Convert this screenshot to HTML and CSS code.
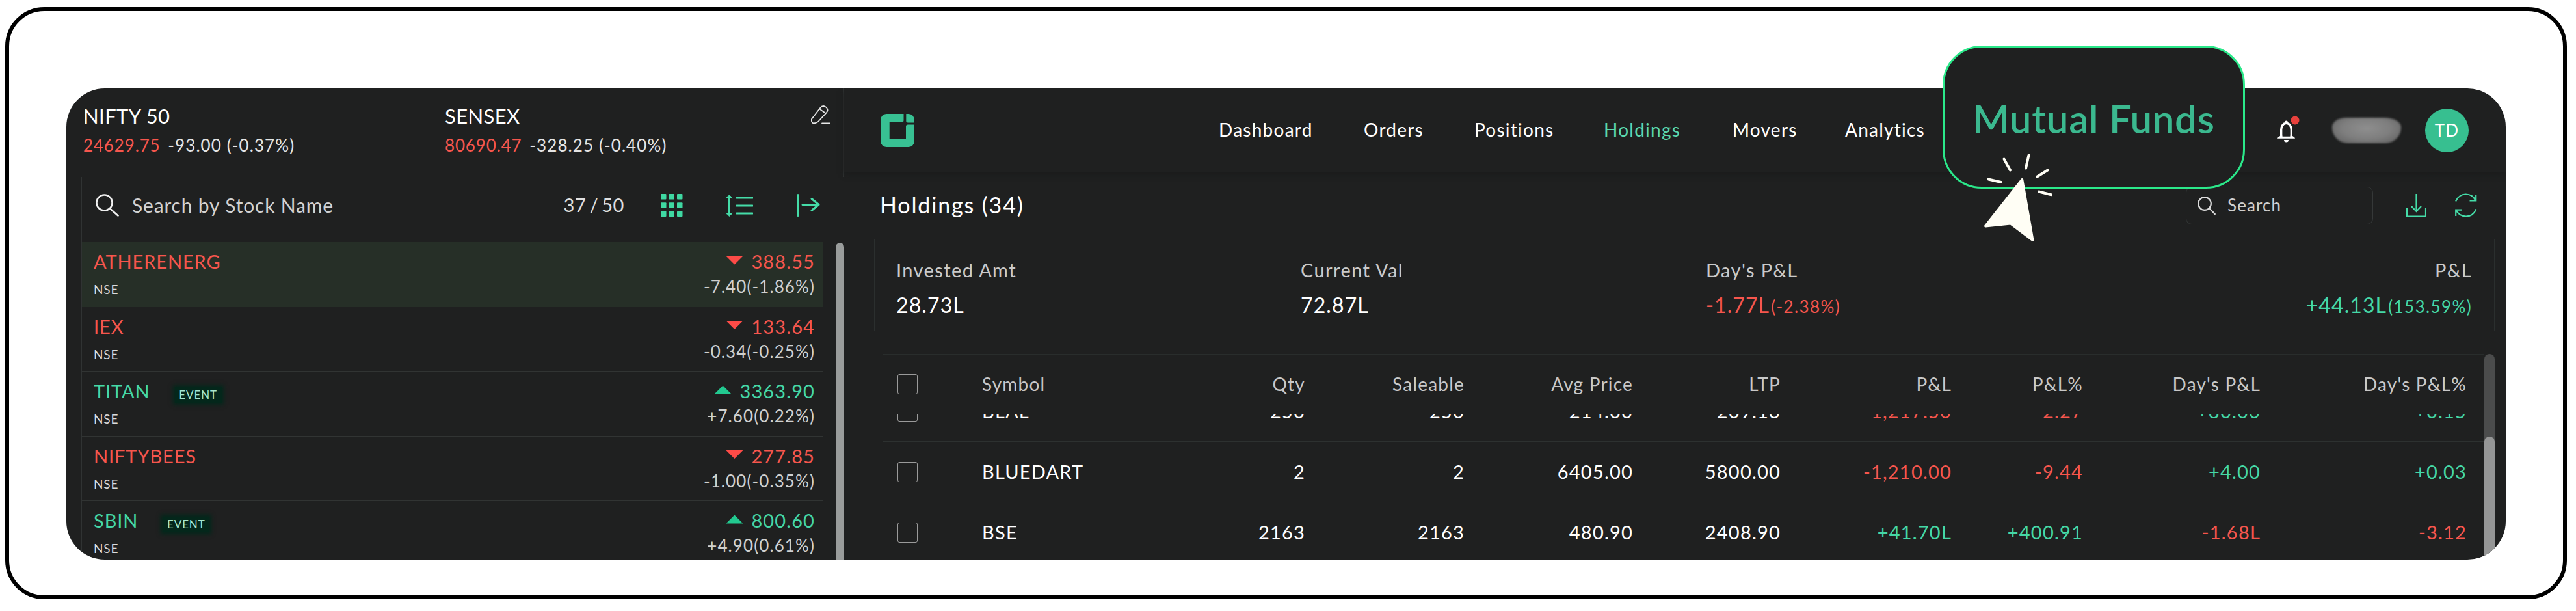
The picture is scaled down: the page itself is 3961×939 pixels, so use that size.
FILE: index.html
```html
<!DOCTYPE html>
<html lang="en">

<head>
    <meta charset="UTF-8">
    <meta name="viewport" content="width=device-width, initial-scale=1.0">
    <title>Holdings</title>
    <link rel="stylesheet" href="styles.css">
</head>

<body>
    <div class="frame">
        <div class="app">

            <aside class="sidebar">
                <div class="indices">
                    <div class="index">
                        <h4>NIFTY 50</h4>
                        <p><span class="down">24629.75</span> -93.00 (-0.37%)</p>
                    </div>
                    <div class="index">
                        <h4>SENSEX</h4>
                        <p><span class="down">80690.47</span> -328.25 (-0.40%)</p>
                    </div>
                    <svg class="edit" width="30" height="29" viewBox="0 0 30 29">
                        <path d="M1 21 14.5 3.5C17 .5 20 .3 23 2.6c3 2.400 3.200 5.400 1 8.200L11.500 24.500C9 27.200 6.500 27.500 3 27.300 1 26 .5 23.500 1 21ZM13.200 5.500l9.300 6.500M17 27.500h12" />
                    </svg>
                </div>

                <div class="watchlist">
                    <div class="watch-search">
                        <svg class="search-icon" width="37" height="35" viewBox="0 0 37 35">
                            <circle cx="14.500" cy="13.500" r="12" />
                            <path d="M23 22.500 35.500 33.500" />
                        </svg>
                        <span class="placeholder">Search by Stock Name</span>
                        <span class="count">37 / 50</span>
                        <svg class="tool grid-icon" width="34" height="35" viewBox="0 0 34 35">
                            <rect x="0" y="0" width="8.500" height="8.500" rx="1" />
                            <rect x="12.500" y="0" width="8.500" height="8.500" rx="1" />
                            <rect x="25" y="0" width="8.500" height="8.500" rx="1" />
                            <rect x="0" y="13.200" width="8.500" height="8.500" rx="1" />
                            <rect x="12.500" y="13.200" width="8.500" height="8.500" rx="1" />
                            <rect x="25" y="13.200" width="8.500" height="8.500" rx="1" />
                            <rect x="0" y="26.500" width="8.500" height="8.500" rx="1" />
                            <rect x="12.500" y="26.500" width="8.500" height="8.500" rx="1" />
                            <rect x="25" y="26.500" width="8.500" height="8.500" rx="1" />
                        </svg>
                        <svg class="tool sort-icon" width="42" height="34" viewBox="0 0 42 34">
                            <path d="M5.500 4v26M16.500 5H41M16.500 17H41M16.500 29H41" />
                            <path class="solid" d="M5.500.8 10.300 5.500H.7ZM5.500 33.200 10.300 28.500H.7Z" />
                        </svg>
                        <svg class="tool exit-icon" width="37" height="35" viewBox="0 0 37 35">
                            <path d="M2 1.500v32M9 16.500h25M23 7.500l11 9-11 9" />
                        </svg>
                    </div>

                    <div class="list">
                        <div class="stocks">
                            <div class="stock active">
                                <div class="name">
                                    <h5 class="down">ATHERENERG</h5>
                                    <small>NSE</small>
                                </div>
                                <div class="price">
                                    <h5 class="down"><i class="tri tri-down"></i>388.55</h5>
                                    <p>-7.40(-1.86%)</p>
                                </div>
                            </div>
                            <div class="stock">
                                <div class="name">
                                    <h5 class="down">IEX</h5>
                                    <small>NSE</small>
                                </div>
                                <div class="price">
                                    <h5 class="down"><i class="tri tri-down"></i>133.64</h5>
                                    <p>-0.34(-0.25%)</p>
                                </div>
                            </div>
                            <div class="stock">
                                <div class="name">
                                    <h5 class="up">TITAN<span class="badge">EVENT</span></h5>
                                    <small>NSE</small>
                                </div>
                                <div class="price">
                                    <h5 class="up"><i class="tri tri-up"></i>3363.90</h5>
                                    <p>+7.60(0.22%)</p>
                                </div>
                            </div>
                            <div class="stock">
                                <div class="name">
                                    <h5 class="down">NIFTYBEES</h5>
                                    <small>NSE</small>
                                </div>
                                <div class="price">
                                    <h5 class="down"><i class="tri tri-down"></i>277.85</h5>
                                    <p>-1.00(-0.35%)</p>
                                </div>
                            </div>
                            <div class="stock">
                                <div class="name">
                                    <h5 class="up">SBIN<span class="badge">EVENT</span></h5>
                                    <small>NSE</small>
                                </div>
                                <div class="price">
                                    <h5 class="up"><i class="tri tri-up"></i>800.60</h5>
                                    <p>+4.90(0.61%)</p>
                                </div>
                            </div>
                        </div>
                        <div class="scrollbar"></div>
                    </div>
                </div>
            </aside>

            <main class="main">
                <header class="topbar">
                    <svg class="logo" width="52" height="51" viewBox="0 0 52 51">
                        <path d="M9 0H35.500V10a3 3 0 0 1-3 3H13.700V38H39V19.500a3 3 0 0 1 3-3H52V42a9 9 0 0 1-9 9H9a9 9 0 0 1-9-9V9a9 9 0 0 1 9-9Z" />
                        <path d="M39.300 0H43a9 9 0 0 1 9 9v4.500H42a2.700 2.700 0 0 1-2.700-2.700Z" />
                    </svg>
                    <nav>
                        <a>Dashboard</a>
                        <a>Orders</a>
                        <a>Positions</a>
                        <a class="current">Holdings</a>
                        <a>Movers</a>
                        <a>Analytics</a>
                    </nav>
                    <div class="account">
                        <svg class="bell" width="34" height="41" viewBox="0 0 34 41">
                            <path class="line" d="M5.800 33V21.500C5.800 15.500 9 11.500 13.500 11.500S21.200 15.500 21.200 21.500V33" />
                            <path d="M13.500 7.500a2.500 2.500 0 0 1 2.500 2.500v2h-5v-2a2.500 2.500 0 0 1 2.500-2.500ZM0 34.800C.5 32.500 3 32 4.500 30.500h18C24 32 26.500 32.500 27 34.800ZM10 37h7a3.500 3.500 0 0 1-7 0Z" />
                            <path class="hole" d="M7.600 31.800V21.500C7.600 16.500 10 13.400 13.500 13.400s5.900 3.100 5.900 8.100v10.300Z" />
                            <circle class="dot" cx="27" cy="7" r="6.500" />
                        </svg>
                        <div class="hidden-id"></div>
                        <div class="avatar">TD</div>
                    </div>
                </header>

                <div class="title-row">
                    <h2>Holdings (34)</h2>
                    <div class="search-box">
                        <svg class="search-icon" width="28" height="28" viewBox="0 0 28 28">
                            <circle cx="11" cy="11" r="9.800" />
                            <path d="M18 18 26.800 27" />
                        </svg>
                        <span>Search</span>
                    </div>
                    <svg class="tool thin download" width="31" height="36" viewBox="0 0 31 36">
                        <path d="M15.500 0V27M8 19l7.500 8L23 19M1 22v12.700H30V22" />
                    </svg>
                    <svg class="tool thin refresh" width="34" height="37" viewBox="0 0 34 37">
                        <path d="M1 12.500C4 5.500 9.500 1.500 16.500 1.500S29 5.500 31.500 11M32.200 2v9.300H22.500M32.500 24.500C29.500 31.500 24 35.500 17 35.500S4.500 31.500 1.500 26M1.200 35v-9.300H11" />
                    </svg>
                </div>

                <section class="summary">
                    <div>
                        <label>Invested Amt</label>
                        <p>28.73L</p>
                    </div>
                    <div>
                        <label>Current Val</label>
                        <p>72.87L</p>
                    </div>
                    <div>
                        <label>Day's P&amp;L</label>
                        <p class="down">-1.77L<small>(-2.38%)</small></p>
                    </div>
                    <div class="right">
                        <label>P&amp;L</label>
                        <p class="up">+44.13L<small>(153.59%)</small></p>
                    </div>
                </section>

                <section class="holdings">
                    <div class="table">
                        <div class="row head">
                            <i class="check"></i>
                            <span>Symbol</span>
                            <span>Qty</span>
                            <span>Saleable</span>
                            <span>Avg Price</span>
                            <span>LTP</span>
                            <span>P&amp;L</span>
                            <span>P&amp;L%</span>
                            <span>Day's P&amp;L</span>
                            <span>Day's P&amp;L%</span>
                        </div>
                        <!-- rows scroll under the header, the first one is half way out -->
                        <div class="rows">
                            <div class="row">
                                <i class="check"></i>
                                <span>BLAL</span>
                                <span>250</span>
                                <span>250</span>
                                <span>214.00</span>
                                <span>209.13</span>
                                <span class="down">-1,217.50</span>
                                <span class="down">-2.27</span>
                                <span class="up">+80.00</span>
                                <span class="up">+0.15</span>
                            </div>
                            <div class="row">
                                <i class="check"></i>
                                <span>BLUEDART</span>
                                <span>2</span>
                                <span>2</span>
                                <span>6405.00</span>
                                <span>5800.00</span>
                                <span class="down">-1,210.00</span>
                                <span class="down">-9.44</span>
                                <span class="up">+4.00</span>
                                <span class="up">+0.03</span>
                            </div>
                            <div class="row">
                                <i class="check"></i>
                                <span>BSE</span>
                                <span>2163</span>
                                <span>2163</span>
                                <span>480.90</span>
                                <span>2408.90</span>
                                <span class="up">+41.70L</span>
                                <span class="up">+400.91</span>
                                <span class="down">-1.68L</span>
                                <span class="down">-3.12</span>
                            </div>
                        </div>
                    </div>
                    <div class="track">
                        <div class="thumb"></div>
                    </div>
                </section>
            </main>
        </div>

        <div class="callout">Mutual Funds</div>
        <svg class="cursor" width="112" height="142" viewBox="3048 232 112 142">
            <path class="arrow" d="M3109.300 276 3053 347.500 3091.500 343.500 3125.500 369Z" />
            <path class="rays" d="M3057.500 275.500 3077 280M3081.500 244.500 3091 261.500M3119.500 238.500 3115 258.500M3148.500 261.500 3132.500 271.500M3135 294.500 3154 299.300" />
        </svg>
    </div>
</body>

</html>
```

FILE: styles.css
```css
* {
    box-sizing: border-box;
}

body {
    margin: 0;
    padding: 11px 14px 0 8px;
    background: #fff;
    font-family: Lato, "Open Sans", sans-serif;
    letter-spacing: 1.1px;
    color: #fff;
}

h2, h4, h5, p {
    margin: 0;
    font-weight: 400;
}

i {
    font-style: normal;
}

svg {
    display: block;
    flex: none;
    fill: none;
}

.up {
    color: #45d8a6;
}

.down {
    color: #f6564d;
}

.frame {
    position: relative;
    height: 910px;
    padding: 119px 0 0 88px;
    border: 6px solid #000;
    border-radius: 60px;
}

.app {
    display: grid;
    grid-template-columns: 1196px 1fr;
    width: 3751px;
    height: 724px;
    overflow: hidden;
    border-radius: 59px;
    background: #1f2020;
}

/* left column */
.sidebar {
    display: flex;
    flex-direction: column;
    min-height: 0;
}

.indices {
    display: flex;
    flex: none;
    height: 136px;
    padding: 22px 20px 0 26px;
    border-right: 1px solid #303333;
}

.index {
    width: 556px;
}

.index h4 {
    font-size: 31px;
    line-height: 40px;
    letter-spacing: 0.4px;
}

.index p {
    margin-top: 5px;
    font-size: 26px;
    line-height: 40px;
    color: #e4e4e4;
}

.index .down {
    margin-right: 4px;
    letter-spacing: 0.85px;
}

.edit {
    margin: 4px 0 0 auto;
    stroke: #e6e6e6;
    stroke-width: 1.8;
    stroke-linecap: round;
}

.watchlist {
    display: flex;
    flex: 1;
    flex-direction: column;
    min-height: 0;
    margin-left: 23px;
    border-left: 1px solid #303333;
}

.watch-search {
    display: flex;
    flex: none;
    align-items: center;
    height: 96px;
    padding: 0 36px 8px 20px;
    border-bottom: 1px solid #343836;
}

.search-icon {
    stroke: #f0f0f0;
    stroke-width: 2.6;
    stroke-linecap: round;
}

.placeholder {
    margin-left: 20px;
    padding-bottom: 2px;
    font-size: 30px;
    letter-spacing: 0.84px;
    color: #d2d2d2;
}

.count {
    margin-left: auto;
    padding-bottom: 2px;
    font-size: 29px;
    letter-spacing: 0.6px;
    word-spacing: -3px;
    color: #e0e0e0;
}

.tool {
    stroke: #45dca8;
    stroke-width: 3;
    stroke-linecap: round;
    stroke-linejoin: round;
}

.tool.thin {
    stroke-width: 2.2;
    stroke-linecap: butt;
    stroke-linejoin: miter;
}

.grid-icon {
    margin-left: 56px;
    fill: #3fd8a2;
    stroke: none;
}

.sort-icon {
    margin-left: 66px;
}

.sort-icon .solid {
    fill: #45dca8;
    stroke-width: 1;
}

.exit-icon {
    margin-left: 67px;
}

.list {
    display: flex;
    flex: 1;
    justify-content: space-between;
    min-height: 0;
    padding-top: 4px;
}

.stocks {
    width: 1140px;
}

.stock {
    display: flex;
    justify-content: space-between;
    height: 99.5px;
    padding: 12px 13px 0 18px;
    border-bottom: 1px solid #313433;
}

.stock.active {
    background: #262f27;
    border-color: #262f27;
}

.stock h5 {
    display: flex;
    align-items: center;
    font-size: 29px;
    line-height: 36px;
}

.name h5 {
    letter-spacing: 0.9px;
}

.name small {
    display: block;
    margin-top: 13px;
    font-size: 19px;
    line-height: 24px;
    letter-spacing: 0.8px;
    color: #dcdcdc;
}

.badge {
    margin: 6px 0 -6px 38px;
    width: 72px;
    text-align: center;
    font-size: 17px;
    line-height: 24px;
    background: #04271b;
    box-shadow: 0 0 6px 3px #04271b;
    color: #a9e6cf;
}

.price h5 {
    justify-content: flex-end;
}

.price p {
    margin-top: 2px;
    font-size: 26px;
    line-height: 36px;
    text-align: right;
    color: #cfd0cf;
}

.tri {
    width: 26px;
    height: 13px;
    margin: -4px 13px 0 0;
}

.tri-down {
    background: #fd4b47;
    clip-path: polygon(0 0, 100% 0, 50% 100%);
}

.tri-up {
    background: #22c990;
    clip-path: polygon(50% 0, 100% 100%, 0 100%);
}

.scrollbar {
    width: 13px;
    margin-top: 1px;
    border-radius: 7px 7px 0 0;
    background: #999c9b;
}

/* right side */
.main {
    display: flex;
    flex-direction: column;
    min-width: 0;
    min-height: 0;
}

.topbar {
    display: flex;
    flex: none;
    align-items: center;
    height: 128px;
    padding: 0 57px 0 56px;
    box-shadow: 0 4px 8px #1b1c1c;
}

.logo {
    fill: #38c193;
}

.topbar nav {
    display: grid;
    grid-template-columns: 223px 170px 199px 198px 173px 130px;
    margin-left: 468px;
    padding-bottom: 2px;
    font-size: 28px;
    letter-spacing: 1.25px;
}

.topbar .current {
    color: #5bd9ae;
}

.account {
    display: flex;
    align-items: center;
    margin-left: auto;
}

.bell {
    margin-bottom: 4px;
}

.bell path {
    fill: #fff;
}

.bell .line {
    fill: none;
    stroke: #fff;
    stroke-width: 3.6;
}

.bell .hole {
    fill: #1f2020;
}

.bell .dot {
    fill: #e8413d;
}

/* smudge over the client id */
.hidden-id {
    width: 106px;
    height: 39px;
    margin-left: 50px;
    border-radius: 22px 26px 24px 24px / 14px 14px 24px 24px;
    background: radial-gradient(ellipse at 50% 42%, #8e8e8e 0%, #7e7e7e 50%, #5c5c5c 100%);
    filter: blur(1.5px);
}

.avatar {
    display: flex;
    align-items: center;
    justify-content: center;
    width: 67px;
    height: 67px;
    margin-left: 37px;
    border-radius: 50%;
    background: #37bf90;
    font-size: 26px;
}

.title-row {
    display: flex;
    flex: none;
    align-items: center;
    height: 103px;
    padding: 0 44px 0 55px;
}

.title-row h2 {
    padding-bottom: 2px;
    font-size: 34px;
    letter-spacing: 1.85px;
}

.search-box {
    display: flex;
    align-items: center;
    width: 288px;
    height: 58px;
    margin-left: auto;
    padding-left: 17px;
    border: 1px solid #353838;
    border-radius: 9px;
    font-size: 26px;
    color: #d0d0d0;
}

.search-box .search-icon {
    stroke: #dedede;
    stroke-width: 2.2;
}

.search-box span {
    margin-left: 18px;
    padding-bottom: 2px;
}

.download {
    margin-left: 51px;
}

.refresh {
    margin-left: 44px;
}

.summary {
    display: grid;
    flex: none;
    grid-template-columns: 622px 623px 1fr auto;
    height: 142px;
    margin: 0 17px 0 46px;
    padding: 27px 34px 0 33px;
    border: 1px solid #2b2f2e;
}

.summary label {
    display: block;
    font-size: 29px;
    line-height: 40px;
    letter-spacing: 1.4px;
    color: #cacaca;
}

.summary p {
    margin-top: 12px;
    font-size: 32px;
    line-height: 44px;
}

.summary small {
    margin-left: 2px;
    font-size: 26px;
    letter-spacing: 1.4px;
}

.right {
    text-align: right;
}

.holdings {
    display: flex;
    flex: 1;
    min-height: 0;
    margin: 35px 17px 0 59px;
}

.table {
    display: flex;
    flex: 1;
    flex-direction: column;
    min-height: 0;
    border-top: 1px solid #292d2c;
}

.row {
    display: grid;
    flex: none;
    grid-template-columns: 130px 250px 247px 245px 259px 227px 263px 202px 273px 317px;
    align-items: center;
    height: 93px;
    padding-left: 23px;
    border-bottom: 1px solid #2d3130;
    font-size: 29px;
    letter-spacing: 1.2px;
}

.row span {
    padding-bottom: 2px;
    text-align: right;
}

.row span:nth-child(2) {
    text-align: left;
}

.row.head {
    height: 92px;
    font-size: 28px;
}

.row.head span {
    color: #c8c8c8;
}

.check {
    width: 31px;
    height: 31px;
    border: 1.5px solid #9a9a9a;
    border-radius: 3px;
}

.rows {
    flex: 1;
    min-height: 0;
    overflow: hidden;
}

.rows .row:first-child {
    margin-top: -51px;
}

.track {
    width: 16px;
    padding-top: 127px;
    border-radius: 8px 8px 0 0;
    background: #4b4c4c;
}

.thumb {
    height: 100%;
    border-radius: 8px 8px 0 0;
    background: #959696;
}

/* highlighted menu item lying over the top bar */
.callout {
    position: absolute;
    top: 53px;
    left: 2973px;
    display: flex;
    align-items: center;
    justify-content: center;
    width: 465px;
    height: 220px;
    padding-top: 4px;
    border: 3px solid #2be88a;
    border-radius: 60px;
    background: #1f2020;
    font-size: 60px;
    font-weight: 600;
    letter-spacing: 0.7px;
    color: #3bb98f;
}

.cursor {
    position: absolute;
    top: 215px;
    left: 3034px;
}

.cursor path {
    stroke: #fffef5;
    stroke-width: 4;
    stroke-linecap: round;
    stroke-linejoin: round;
}

.cursor .arrow {
    fill: #fffef5;
}
```
